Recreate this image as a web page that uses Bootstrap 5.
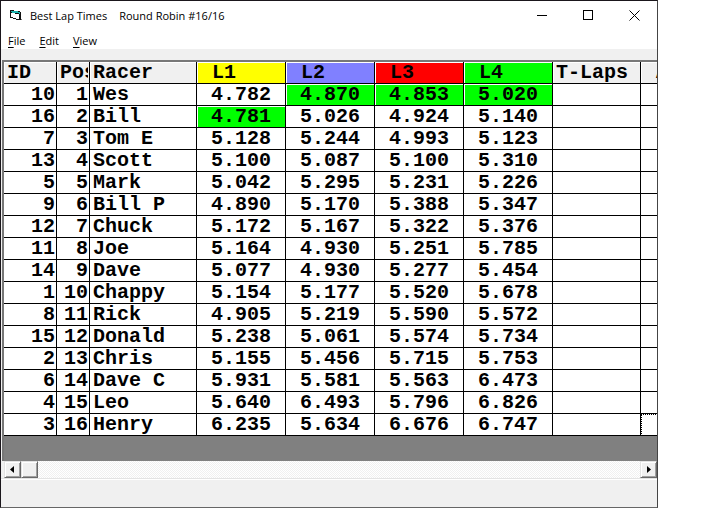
<!DOCTYPE html>
<html lang="en">
<head>
<meta charset="utf-8">
<meta name="viewport" content="width=device-width, initial-scale=1">
<title>Best Lap Times</title>
<link href="https://cdn.jsdelivr.net/npm/bootstrap@5.3.0/dist/css/bootstrap.min.css" rel="stylesheet">
<style>
  body { background: #fff; color: #000; font-family: "Open Sans", "Noto Sans", sans-serif; font-size: 11px; line-height: 16px; }
  .desktop { padding-right: 50px; }
  .app-window { background: #f0f0f0; border: 1px solid #1a161b; border-right-color: #444; border-bottom-color: #666; }
  .title-bar { height: 29px; padding-left: 8px; }
  .app-icon { margin-right: 7px; }
  .caption-btn { width: 46px; height: 29px; }
  .caption-btn, .menu-btn { background: transparent; border: 0; padding: 0; color: #000; }
  .menu-strip { height: 19px; padding: 2px 0 0 7px; gap: 14px; }
  .menu-btn u { text-underline-offset: 2px; }
  .grid-frame { margin: 11px 0 0 1px; border: solid #777; border-width: 2px 0 0 2px; background: #808080; padding-bottom: 25px; }
  .lap-grid { table-layout: fixed; width: 690px; border-collapse: separate; border-spacing: 0; font: bold 20px/20px "Liberation Mono", monospace; }
  .lap-grid th, .lap-grid td { height: 22px; padding: 0 1px 0 3px; border: solid #000; border-width: 0 1px 1px 0; background: #fff; overflow: hidden; white-space: nowrap; box-shadow: inset 1px 1px #fff; }
  .lap-grid th { background: #f0f0f0; }
  .lap-grid th.lane { padding-left: 15px; }
  .lap-grid td:nth-child(-n+2) { text-align: right; }
  .lap-grid td:nth-child(n+4) { text-align: center; padding: 0 2px; }
  .lap-grid .lane-1 { background: #ff0; }
  .lap-grid .lane-2 { background: #8080ff; }
  .lap-grid .lane-3 { background: #f00; }
  .lap-grid .lane-4, .lap-grid .best { background: #0f0; }
  .lap-grid td.current { outline: 1px dotted #000; outline-offset: -1px; }
  .w-id { width: 53px; } .w-pos { width: 33px; } .w-racer { width: 107px; } .w-lane { width: 89px; } .w-total { width: 88px; }
  .scroll-track { height: 17px; margin-left: 3px; background: repeating-conic-gradient(#f0f0f0 0 25%, #fff 0 50%) 0 0 / 2px 2px; }
  .scroll-btn { width: 17px; height: 17px; padding: 0; background: #f0f0f0; border: 1px solid; border-color: #e3e3e3 #696969 #696969 #e3e3e3; box-shadow: inset 1px 1px #fff, inset -1px -1px #a0a0a0; }
  .frame-edge { height: 2px; background: #fff; border-top: 1px solid #e3e3e3; }
</style>
<script src="https://cdn.jsdelivr.net/npm/bootstrap@5.3.0/dist/js/bootstrap.bundle.min.js"></script>
</head>
<body>
<div class="desktop min-vh-100 d-flex">
<main class="app-window flex-fill overflow-hidden d-flex flex-column">
  <header class="title-bar bg-white d-flex align-items-center flex-shrink-0">
    <svg class="app-icon" width="14" height="14" viewBox="0 0 14 14" shape-rendering="crispEdges" aria-hidden="true">
      <path d="M2 3h2v1h6v6H7V9H3V8H2z" fill="#fff"/>
      <path d="M2 2h7v1h2v2H6V4H3V3H2z" fill="#1bb5b0"/>
      <path d="M1 1h4v1H2v1h1v1H2v4h2v1h3v1h3V5H6V4h4v1h1V3H9V2h2v1h1v8H7v-1H4V9H1z" fill="#111"/>
      <path d="M12 10h1v1h-1z" fill="#777"/>
    </svg>
    <div class="d-flex text-nowrap me-auto"><span class="me-2">Best Lap Times</span><span class="ms-1">Round Robin #16/16</span></div>
    <button class="caption-btn" type="button" aria-label="Minimize"><svg class="d-block m-auto" width="11" height="11" shape-rendering="crispEdges"><path d="M0 5.5h10" stroke="#000"/></svg></button>
    <button class="caption-btn" type="button" aria-label="Maximize"><svg class="d-block m-auto" width="11" height="11" shape-rendering="crispEdges"><path d="M.5.5h9v9h-9z" fill="none" stroke="#000"/></svg></button>
    <button class="caption-btn" type="button" aria-label="Close"><svg class="d-block m-auto" width="11" height="11"><path d="M.5.5l10 10M10.5.5l-10 10" stroke="#000"/></svg></button>
  </header>
  <nav class="menu-strip bg-white d-flex align-items-center flex-shrink-0" aria-label="Menu">
    <button class="menu-btn" type="button"><u>F</u>ile</button>
    <button class="menu-btn" type="button"><u>E</u>dit</button>
    <button class="menu-btn" type="button"><u>V</u>iew</button>
  </nav>
  <div class="grid-frame overflow-hidden flex-shrink-0">
    <table class="lap-grid">
      <colgroup><col class="w-id"><col class="w-pos"><col class="w-racer"><col class="w-lane"><col class="w-lane"><col class="w-lane"><col class="w-lane"><col class="w-total"><col></colgroup>
      <thead><tr><th>ID</th><th><div class="overflow-hidden">Pos</div></th><th>Racer</th><th class="lane lane-1">L1</th><th class="lane lane-2">L2</th><th class="lane lane-3">L3</th><th class="lane lane-4">L4</th><th>T-Laps</th><th class="lane">Avg</th></tr></thead>
      <tbody>
        <tr><td>10</td><td>1</td><td>Wes</td><td>4.782</td><td class="best">4.870</td><td class="best">4.853</td><td class="best">5.020</td><td></td><td></td></tr>
        <tr><td>16</td><td>2</td><td>Bill</td><td class="best">4.781</td><td>5.026</td><td>4.924</td><td>5.140</td><td></td><td></td></tr>
        <tr><td>7</td><td>3</td><td>Tom E</td><td>5.128</td><td>5.244</td><td>4.993</td><td>5.123</td><td></td><td></td></tr>
        <tr><td>13</td><td>4</td><td>Scott</td><td>5.100</td><td>5.087</td><td>5.100</td><td>5.310</td><td></td><td></td></tr>
        <tr><td>5</td><td>5</td><td>Mark</td><td>5.042</td><td>5.295</td><td>5.231</td><td>5.226</td><td></td><td></td></tr>
        <tr><td>9</td><td>6</td><td>Bill P</td><td>4.890</td><td>5.170</td><td>5.388</td><td>5.347</td><td></td><td></td></tr>
        <tr><td>12</td><td>7</td><td>Chuck</td><td>5.172</td><td>5.167</td><td>5.322</td><td>5.376</td><td></td><td></td></tr>
        <tr><td>11</td><td>8</td><td>Joe</td><td>5.164</td><td>4.930</td><td>5.251</td><td>5.785</td><td></td><td></td></tr>
        <tr><td>14</td><td>9</td><td>Dave</td><td>5.077</td><td>4.930</td><td>5.277</td><td>5.454</td><td></td><td></td></tr>
        <tr><td>1</td><td>10</td><td>Chappy</td><td>5.154</td><td>5.177</td><td>5.520</td><td>5.678</td><td></td><td></td></tr>
        <tr><td>8</td><td>11</td><td>Rick</td><td>4.905</td><td>5.219</td><td>5.590</td><td>5.572</td><td></td><td></td></tr>
        <tr><td>15</td><td>12</td><td>Donald</td><td>5.238</td><td>5.061</td><td>5.574</td><td>5.734</td><td></td><td></td></tr>
        <tr><td>2</td><td>13</td><td>Chris</td><td>5.155</td><td>5.456</td><td>5.715</td><td>5.753</td><td></td><td></td></tr>
        <tr><td>6</td><td>14</td><td>Dave C</td><td>5.931</td><td>5.581</td><td>5.563</td><td>6.473</td><td></td><td></td></tr>
        <tr><td>4</td><td>15</td><td>Leo</td><td>5.640</td><td>6.493</td><td>5.796</td><td>6.826</td><td></td><td></td></tr>
        <tr><td>3</td><td>16</td><td>Henry</td><td>6.235</td><td>5.634</td><td>6.676</td><td>6.747</td><td></td><td class="current"></td></tr>
      </tbody>
    </table>
  </div>
  <div class="scroll-track d-flex flex-shrink-0">
    <button class="scroll-btn" type="button" aria-label="Scroll left"><svg class="d-block m-auto" width="7" height="7"><path d="M5 0v7L1 3.5z"/></svg></button>
    <button class="scroll-btn me-auto" type="button" aria-label="Scroll position"></button>
    <button class="scroll-btn" type="button" aria-label="Scroll right"><svg class="d-block m-auto" width="7" height="7"><path d="M2 0v7l4-3.5z"/></svg></button>
  </div>
  <div class="frame-edge flex-shrink-0"></div>
</main>
</div>
</body>
</html>
